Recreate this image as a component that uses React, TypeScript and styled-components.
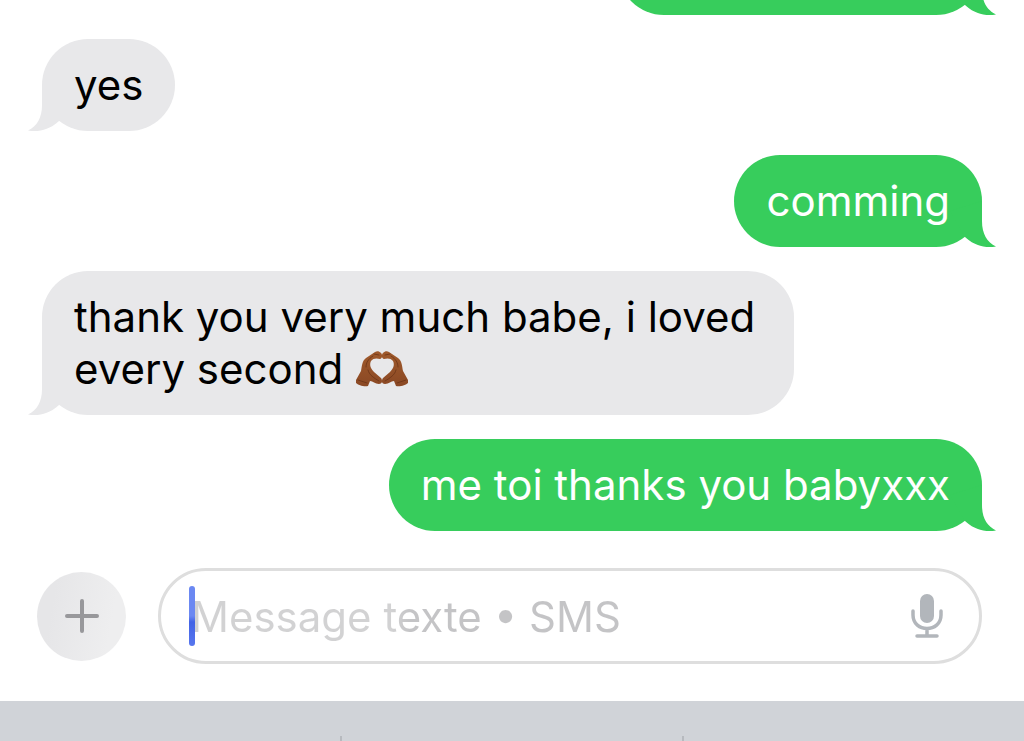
import React from "react";
import styled, { createGlobalStyle, css } from "styled-components";

const GlobalStyle = createGlobalStyle`
  * { box-sizing: border-box; }
  html, body, #root { height: 100%; }
  body {
    margin: 0;
    background: #ffffff;
    font-family: Inter, "Liberation Sans", sans-serif;
  }
`;

type Side = "sent" | "received";

const sentColor = "#37cd5c";
const receivedColor = "#e8e8ea";

const Screen = styled.div`
  display: flex;
  flex-direction: column;
  min-height: 100%;
  overflow: hidden;
`;

const Thread = styled.main`
  display: flex;
  flex-direction: column;
  gap: 24px;
  padding: 0 42px;
`;

const Row = styled.div<{ $side: Side; $clipped?: boolean }>`
  display: flex;
  justify-content: ${(p) => (p.$side === "sent" ? "flex-end" : "flex-start")};
  ${(p) =>
    p.$clipped &&
    css`
      align-items: flex-end;
      height: 15px;
      margin: 0 -42px;
      padding: 0 42px;
      overflow: hidden;
    `}
`;

const Bubble = styled.div<{ $side: Side }>`
  position: relative;
  flex-shrink: 0;
  max-width: 80%;
  min-height: 92px;
  padding: 20px 32px;
  border-radius: 46px;
  font-size: 42px;
  line-height: 52px;
  color: ${(p) => (p.$side === "sent" ? "#ffffff" : "#000000")};
  background: ${(p) => (p.$side === "sent" ? sentColor : receivedColor)};
`;

const EarlierBubble = styled(Bubble)`
  width: 364px;
`;

const TailShape = styled.svg<{ $side: Side }>`
  position: absolute;
  bottom: 0;
  width: 46px;
  height: 46px;
  ${(p) =>
    p.$side === "sent"
      ? css`
          right: -14px;
          fill: ${sentColor};
        `
      : css`
          left: -14px;
          transform: scaleX(-1);
          fill: ${receivedColor};
        `}
`;

const Emoji = styled.svg`
  width: 54px;
  height: 40px;
  vertical-align: -6px;
`;

const Composer = styled.form`
  display: flex;
  align-items: center;
  gap: 32px;
  padding: 37px 42px 37px 37px;
`;

const AddButton = styled.button`
  display: flex;
  align-items: center;
  justify-content: center;
  flex-shrink: 0;
  width: 89px;
  height: 89px;
  padding: 0;
  border: 0;
  border-radius: 50%;
  background: linear-gradient(100deg, #e6e6e8 20%, #eeeeef 80%);
`;

const Field = styled.div`
  position: relative;
  display: flex;
  align-items: center;
  flex: 1;
  min-width: 0;
  height: 96px;
  padding: 0 36px 0 30px;
  border: 3px solid #dedede;
  border-radius: 48px;
`;

const Caret = styled.span`
  position: absolute;
  left: 28px;
  width: 6px;
  height: 60px;
  border-radius: 3px;
  background: linear-gradient(#6b88f2 50%, #4263e6 60%, #5877ee);
`;

const TextInput = styled.input`
  flex: 1;
  min-width: 0;
  height: 60px;
  padding: 0;
  border: 0;
  outline: 0;
  background: transparent;
  font: 42px/52px Inter, "Liberation Sans", sans-serif;
  color: #000000;
  &::placeholder {
    color: transparent;
    background: linear-gradient(90deg, #d2d2d3 200px, #c4c4c6 220px);
    background-clip: text;
    -webkit-background-clip: text;
    opacity: 1;
  }
`;

const MicButton = styled.button`
  display: flex;
  padding: 0;
  border: 0;
  background: transparent;
`;

const Keyboard = styled.footer`
  display: flex;
  align-items: flex-end;
  flex: 1;
  min-height: 40px;
  background: #d0d3d8;
`;

const Suggestion = styled.div`
  flex: 1;
  height: 5px;
  & + & {
    border-left: 2px solid #b7babf;
  }
`;

const Tail = ({ side }: { side: Side }) => (
  <TailShape $side={side} viewBox="0 0 46 46" aria-hidden="true">
    <path d="M32 0V20C32 33 37 41 46 45.5C34 48 22 43 15 36L0 10Z" />
  </TailShape>
);

const Message = ({ side, children }: { side: Side; children: React.ReactNode }) => (
  <Row $side={side}>
    <Bubble $side={side}>
      {children}
      <Tail side={side} />
    </Bubble>
  </Row>
);

const hand =
  "M1 30L6 21C7 16 7 11 11 8L20 2C22 1 24 1 26 3C28 5 27 9 25 9C22 8 18 8 16 11C14 15 16 19 19 22L26 28C28 31 27 34 24 34C20 34 18 31 15 31L13 36C9 37 3 35 1 33Z";
const creases = "M11 17C11 13 13 9 18 6M13 20C14 25 19 28 24 31M19 4L24 5M3 30L12 33";

const HeartHands = () => (
  <Emoji viewBox="0 0 54 40" role="img" aria-label="heart hands">
    <defs>
      <linearGradient id="skin" x1="0" y1="0" x2="0" y2="1">
        <stop offset="0" stopColor="#a05a2c" />
        <stop offset="1" stopColor="#8a4824" />
      </linearGradient>
    </defs>
    {[undefined, "translate(54 0) scale(-1 1)"].map((transform, i) => (
      <g key={i} transform={transform}>
        <path d={hand} fill="url(#skin)" />
        <path d={creases} fill="none" stroke="#6b3316" strokeWidth="0.8" strokeLinecap="round" />
      </g>
    ))}
  </Emoji>
);

export default function App() {
  return (
    <Screen>
      <GlobalStyle />
      <Thread>
        <Row $side="sent" $clipped>
          <EarlierBubble $side="sent">
            <Tail side="sent" />
          </EarlierBubble>
        </Row>
        <Message side="received">yes</Message>
        <Message side="sent">comming</Message>
        <Message side="received">
          thank you very much babe, i loved every second <HeartHands />
        </Message>
        <Message side="sent">me toi thanks you babyxxx</Message>
      </Thread>
      <Composer onSubmit={(e) => e.preventDefault()}>
        <AddButton type="button" aria-label="Add">
          <svg width="36" height="36" viewBox="0 0 36 36" stroke="#98989b" strokeWidth="4" strokeLinecap="round">
            <path d="M18 3V33M3 18H33" />
          </svg>
        </AddButton>
        <Field>
          <Caret />
          <TextInput aria-label="Message texte" placeholder="Message texte • SMS" />
          <MicButton type="button" aria-label="Dictate">
            <svg width="32" height="46" viewBox="0 0 32 46" fill="none" stroke="#b2b6bb" strokeWidth="3.5" strokeLinecap="round">
              <rect x="9" y="1" width="14" height="29" rx="7" fill="#b2b6bb" stroke="none" />
              <path d="M2 18V22C2 40 30 40 30 22V18M16 36V42M6 43H26" />
            </svg>
          </MicButton>
        </Field>
      </Composer>
      <Keyboard>
        <Suggestion />
        <Suggestion />
        <Suggestion />
      </Keyboard>
    </Screen>
  );
}
